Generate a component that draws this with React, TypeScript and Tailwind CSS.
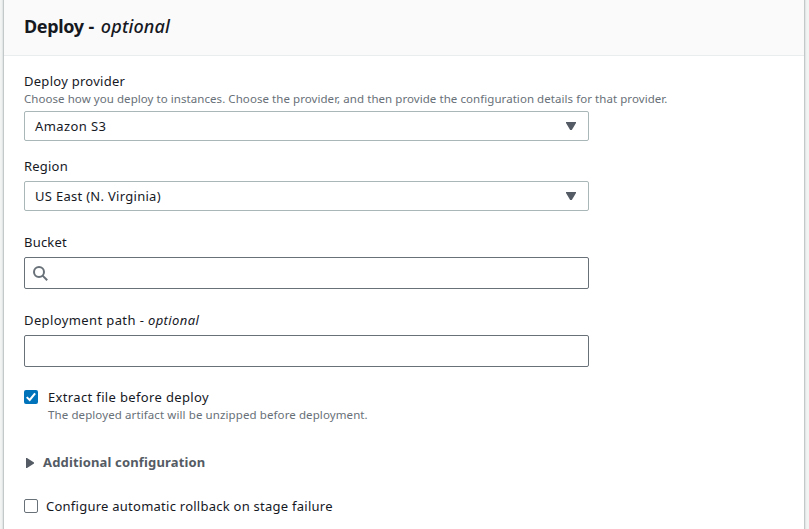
import type { ReactNode } from "react";

function Select({ value }: { value: ReactNode }) {
  return (
    <div className="flex h-[30px] w-[565px] items-center justify-between rounded-[2px] border border-[#aab7b8] bg-white pl-[10px] pr-3">
      <span>{value}</span>
      <svg className="h-2 w-[10px] fill-[#545b64]" viewBox="0 0 10 8">
        <path d="M0 0h10v1L5.8 8H4.2L0 1z" />
      </svg>
    </div>
  );
}

function Label({ children }: { children: ReactNode }) {
  return <div className="h-5 whitespace-nowrap leading-5">{children}</div>;
}

export default function App() {
  return (
    <div className="h-[529px] overflow-hidden bg-[#f2f3f3] pl-[3px] pr-1 font-['Noto_Sans','Open_Sans',sans-serif] text-[13px] leading-5 text-[#16191f]">
      <main className="h-full w-[802px] border-x border-[#c3c9c9] bg-white shadow-[0_0_1px_1px_#e2e6e6]">
        <header className="flex h-14 items-center border-b border-[#eaeded] bg-[#fafafa] pb-1 pl-5">
          <h2 className="whitespace-nowrap text-[18px] font-bold leading-6">
            <span className="tracking-[-0.35px]">Deploy</span> - <i className="pl-[2px] font-medium tracking-[0.15px]">optional</i>
          </h2>
        </header>
        <div className="flex flex-col pl-5 pt-[15px]">
          <Label>
            <span className="tracking-[0.27px]">Deploy provider</span>
          </Label>
          <p className="h-5 whitespace-nowrap text-[11.5px] leading-4 tracking-[0.06px] text-[#687078]">
            Choose how you deploy to instances. Choose the provider, and then provide the configuration details for that provider.
          </p>
          <Select value={<span className="tracking-[0.4px]">Amazon S3</span>} />
          <div className="mt-[15px] h-[25px]">
            <Label>
              <span className="tracking-[0.2px]">Region</span>
            </Label>
          </div>
          <Select value={<span className="tracking-[0.29px]">US East (N. Virginia)</span>} />
          <div className="mt-[21px] h-[25px]">
            <Label>
              <span className="tracking-[0.2px]">Bucket</span>
            </Label>
          </div>
          <div className="flex h-8 w-[565px] items-center rounded-[2px] border border-[#687078] pl-2 pt-px">
            <svg className="h-4 w-4 fill-none stroke-[#687078] stroke-2" viewBox="0 0 16 16">
              <circle cx="6" cy="6" r="5" />
              <path d="M9.6 9.6l4.6 4.6" />
            </svg>
          </div>
          <div className="mt-[21px] h-[25px]">
            <Label>
              <span className="tracking-[0.39px]">
                Deployment path - <i>optional</i>
              </span>
            </Label>
          </div>
          <div className="h-8 w-[565px] rounded-[2px] border border-[#687078]" />
          <div className="mt-5 flex">
            <svg className="mt-[3px] h-[14px] w-[14px]" viewBox="0 0 14 14">
              <rect width="14" height="14" rx="2" fill="#0073bb" />
              <path d="M2.7 7.1l3 2.9 5.4-6.7" fill="none" stroke="#fff" strokeWidth="2" />
            </svg>
            <div className="pl-[10px]">
              <Label>
                <span className="tracking-[0.35px]">Extract file before deploy</span>
              </Label>
              <p className="h-4 whitespace-nowrap text-[11.5px] leading-4 tracking-[0.1px] text-[#687078]">
                The deployed artifact will be unzipped before deployment.
              </p>
            </div>
          </div>
          <div className="mt-[29px] flex h-5 items-center pl-[2px] pt-px">
            <svg className="h-[10px] w-2 fill-[#545b64]" viewBox="0 0 8 10">
              <path d="M0 0h1L8 4.4v1.2L1 10H0z" />
            </svg>
            <span className="-mt-px whitespace-nowrap pl-[9px] font-bold tracking-[0.15px] text-[#545b64]">Additional configuration</span>
          </div>
          <div className="mt-6 flex h-5 items-center">
            <span className="h-[14px] w-[14px] rounded-[2px] border border-[#687078]" />
            <span className="whitespace-nowrap pl-2 tracking-[0.25px]">Configure automatic rollback on stage failure</span>
          </div>
        </div>
      </main>
    </div>
  );
}
